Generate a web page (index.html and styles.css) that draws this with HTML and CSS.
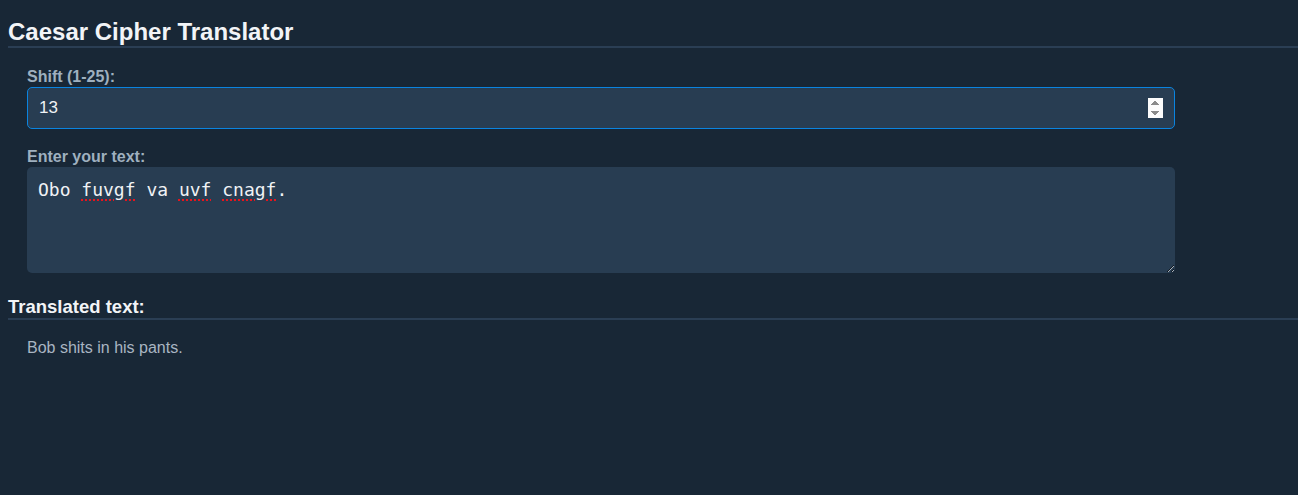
FILE: index.html
```html
<!DOCTYPE html>
<html>
<head>
<meta charset="utf-8">
<link rel="stylesheet" href="styles.css">
</head>
<body>
<h1 class="title">Caesar Cipher Translator</h1>
<div class="form">
  <label class="label" for="shift">Shift (1-25):</label>
  <input id="shift" class="input" type="number" min="1" max="25" value="13" autofocus>
  <label class="label" for="txt">Enter your text:</label>
  <div id="txt" class="textarea" contenteditable="true" spellcheck="false">Obo <span class="miss">fuvgf</span> va <span class="miss">uvf</span> <span class="miss">cnagf</span>.</div>
</div>
<h2 class="subtitle">Translated text:</h2>
<p class="output">Bob shits in his pants.</p>
</body>
</html>
```
FILE: styles.css
```css
html, body {
  background: #182736;
}
body {
  margin: 0;
  padding: 8px 0 8px 8px;
  font-family: "Liberation Sans", Arial, sans-serif;
  color: #f0f2f5;
}
.title {
  margin: 10px 0 0;
  font-size: 24px;
  font-weight: bold;
  line-height: 28px;
  border-bottom: 2px solid #2a3e54;
  color: #f2f4f7;
}
.form {
  padding: 20px 123px 0 19px;
  display: flex;
  flex-direction: column;
}
.label {
  font-size: 16px;
  font-weight: bold;
  color: #9fb0bf;
  line-height: 18px;
  margin-bottom: 1px;
}
.input {
  box-sizing: border-box;
  height: 42px;
  border: 1px solid #0a84e0;
  border-radius: 5px;
  background: #283d52;
  color: #f0f2f5;
  font-family: "Liberation Sans", Arial, sans-serif;
  font-size: 17px;
  padding: 0 11px;
  outline: none;
  margin-bottom: 19px;
  caret-color: #f0f2f5;
}
.textarea {
  box-sizing: border-box;
  height: 106px;
  border-radius: 5px;
  background: #283d52;
  color: #f0f2f5;
  font-family: "DejaVu Sans Mono", monospace;
  font-size: 18px;
  line-height: 21px;
  padding: 12px 11px;
  outline: none;
  resize: vertical;
  overflow: auto;
  white-space: pre-wrap;
}
.miss {
  text-decoration: underline dotted #e8141c;
  text-decoration-thickness: 2px;
  text-underline-offset: 3px;
}
.subtitle {
  margin: 23px 0 0;
  font-size: 18.5px;
  font-weight: bold;
  line-height: 22px;
  border-bottom: 2px solid #2a3e54;
  color: #f2f4f7;
}
.output {
  margin: 19px 0 0 19px;
  font-size: 16px;
  color: #a9b5c2;
}
```
